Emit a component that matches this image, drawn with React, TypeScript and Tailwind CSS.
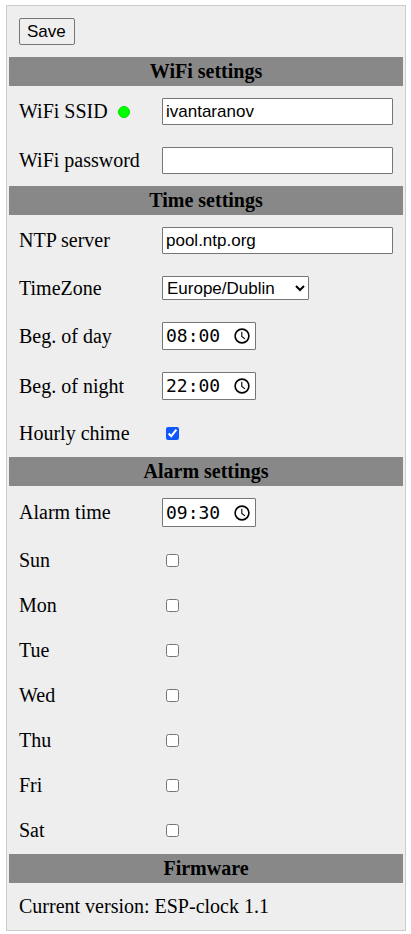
import React, { useState } from "react";

const field =
  "block h-[27px] w-full rounded-[1px] border border-[#767676] bg-white px-[3px] font-['Liberation_Sans',Arial,sans-serif] text-[17px] leading-[20px] text-black";

function Section({ title }: { title: string }) {
  return (
    <h2 className="bg-[#888888] py-[3px] text-center font-bold">{title}</h2>
  );
}

function Row({
  id,
  label,
  children,
}: {
  id: string;
  label: React.ReactNode;
  children: React.ReactNode;
}) {
  return (
    <div className="flex items-center p-[10px]">
      <label htmlFor={id} className="flex w-[143px] shrink-0 items-center">
        {label}
      </label>
      <div className="min-w-0 flex-1">{children}</div>
    </div>
  );
}

// 24-hour time field: the native one follows the browser's locale and may show AM/PM.
function Time({ id, value, height = "h-[28px]" }: { id: string; value: string; height?: string }) {
  const [time, setTime] = useState(value);
  const setNow = () => setTime(new Date().toTimeString().slice(0, 5));
  return (
    <div
      className={`flex w-[94px] items-center justify-between rounded-[1px] border border-[#767676] bg-white pr-[5px] pl-[3px] ${height}`}
    >
      <input
        id={id}
        type="text"
        inputMode="numeric"
        pattern="[0-2][0-9]:[0-5][0-9]"
        maxLength={5}
        value={time}
        onChange={(e) => setTime(e.target.value)}
        className="w-[60px] bg-transparent font-['DejaVu_Sans_Mono',monospace] text-[18px] leading-[20px] text-black outline-none"
      />
      <button type="button" aria-label="Set to current time" onClick={setNow} className="block">
        <svg width="16" height="16" viewBox="0 0 16 16" fill="none" stroke="#000" className="block">
          <circle cx="8" cy="8" r="6.9" strokeWidth="1.6" />
          <path d="M7.8 3.8V8.4L11 10.9" strokeWidth="1.1" />
        </svg>
      </button>
    </div>
  );
}

function Check({ id, checked = false }: { id: string; checked?: boolean }) {
  return (
    <input
      id={id}
      type="checkbox"
      defaultChecked={checked}
      className="mx-1 block h-[13px] w-[13px] accent-[#0f57ff]"
    />
  );
}

const days = ["Sun", "Mon", "Tue", "Wed", "Thu", "Fri", "Sat"];

export default function App() {
  return (
    <form
      className="mt-[5px] mr-[5px] ml-[6px] flex flex-col gap-[2px] border border-[#cccccc] bg-[#eeeeee] p-[2px] font-['Liberation_Serif','Times_New_Roman',serif] text-[20px] leading-[23px] text-black"
      onSubmit={(e) => e.preventDefault()}
    >
      <div className="p-[10px]">
        <button
          type="submit"
          className="block h-[27px] rounded-[2px] border border-[#767676] bg-[#efefef] pr-[8px] pl-[7px] font-['Liberation_Sans',Arial,sans-serif] text-[17px] leading-[20px]"
        >
          Save
        </button>
      </div>
      <Section title="WiFi settings" />
      <Row
        id="ssid"
        label={
          <>
            WiFi SSID
            <span className="ml-[10px] h-3 w-3 rounded-full border border-[#00e000] bg-[#00ff00]" />
          </>
        }
      >
        <input id="ssid" type="text" defaultValue="ivantaranov" className={field} />
      </Row>
      <Row id="password" label="WiFi password">
        <input id="password" type="password" className={field} />
      </Row>
      <Section title="Time settings" />
      <Row id="ntp" label="NTP server">
        <input id="ntp" type="text" defaultValue="pool.ntp.org" className={field} />
      </Row>
      <Row id="timezone" label="TimeZone">
        <select
          id="timezone"
          className="block h-[24px] w-[147px] rounded-[1px] border border-[#767676] bg-white font-['Liberation_Sans',Arial,sans-serif] text-[17px] text-black"
        >
          <option>Europe/Dublin</option>
        </select>
      </Row>
      <Row id="day" label="Beg. of day">
        <Time id="day" value="08:00" />
      </Row>
      <Row id="night" label="Beg. of night">
        <Time id="night" value="22:00" />
      </Row>
      <Row id="chime" label="Hourly chime">
        <Check id="chime" checked />
      </Row>
      <Section title="Alarm settings" />
      <Row id="alarm" label="Alarm time">
        <Time id="alarm" value="09:30" height="h-[29px]" />
      </Row>
      {days.map((day) => (
        <Row key={day} id={day} label={day}>
          <Check id={day} />
        </Row>
      ))}
      <Section title="Firmware" />
      <p className="p-[10px]">Current version: ESP-clock 1.1</p>
    </form>
  );
}
